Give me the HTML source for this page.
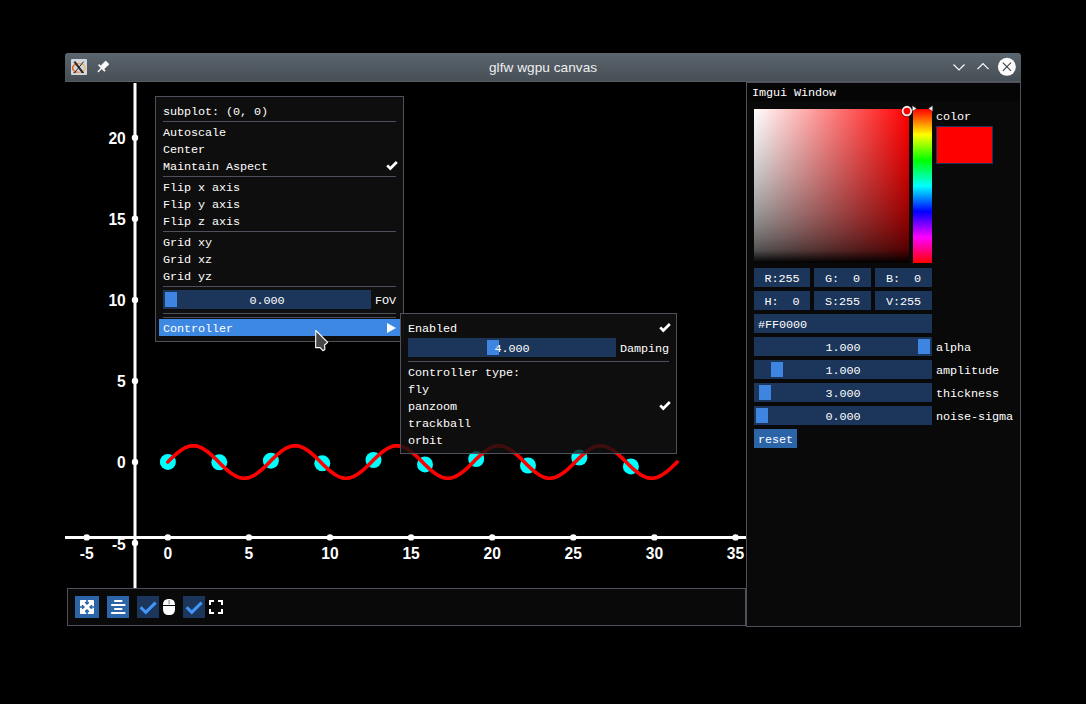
<!DOCTYPE html>
<html><head><meta charset="utf-8">
<style>
*{box-sizing:border-box;margin:0;padding:0}
html,body{width:1086px;height:704px;background:#000;overflow:hidden;position:relative}
.a{position:absolute}
.t{position:absolute;font-family:"Liberation Mono",monospace;font-size:11.8px;letter-spacing:-0.08px;line-height:13px;color:#fff;white-space:pre}
</style></head><body>
<div class="a" style="left:65px;top:53px;width:956px;height:29px;border-radius:3px 3px 0 0;background:linear-gradient(#5c666e 0px,#5a646c 1px,#474f56 28px,#535b63 28px)"></div>
<svg class="a" style="left:65px;top:53px" width="60" height="29" viewBox="65 53 60 29">
<rect x="71" y="59" width="16" height="16" rx="1" fill="#d3d8dc"/>
<ellipse cx="78.9" cy="68" rx="6.3" ry="4.4" fill="none" stroke="url(#xg)" stroke-width="1.5"/>
<defs><linearGradient id="xg" x1="0" x2="1"><stop offset="0" stop-color="#e4561c"/><stop offset="0.5" stop-color="#eea070"/><stop offset="1" stop-color="#e8c070"/></linearGradient></defs>
<line x1="74.4" y1="61.6" x2="82.6" y2="72.4" stroke="#2a2a2a" stroke-width="2"/><line x1="73.6" y1="72.6" x2="75.6" y2="72.6" stroke="#2a2a2a" stroke-width="1"/><line x1="81.4" y1="72.6" x2="84" y2="72.6" stroke="#2a2a2a" stroke-width="1"/>
<line x1="83.6" y1="61.6" x2="74.6" y2="72.6" stroke="#2a2a2a" stroke-width="1"/>
<g transform="translate(94 57)" fill="#fff" stroke="#fff">
<polygon points="11.65,3.98 15.06,7.24 9.94,11.93 7.1,8.52" stroke-width="0.6" stroke-linejoin="round"/>
<line x1="5.1" y1="8.2" x2="10.5" y2="13.6" stroke-width="1.7" stroke-linecap="round"/>
<line x1="7.8" y1="10.9" x2="4.3" y2="14.5" stroke-width="1.4" stroke-linecap="round"/>
</g></svg>
<svg class="a" style="left:940px;top:53px" width="81" height="29" viewBox="940 53 81 29">
<polyline points="953.5,64.5 959,70 964.5,64.5" fill="none" stroke="#fcfcfc" stroke-width="1.2"/>
<polyline points="977.5,69.2 983,63.7 988.5,69.2" fill="none" stroke="#fcfcfc" stroke-width="1.2"/>
<circle cx="1006.9" cy="66.8" r="9" fill="#fcfcfc"/>
<g stroke="#3b4045" stroke-width="1.1"><line x1="1002.8" y1="62.7" x2="1011" y2="70.9"/><line x1="1011" y1="62.7" x2="1002.8" y2="70.9"/></g>
</svg>
<div class="a" style="left:489px;top:57.5px;font-family:'Liberation Sans',sans-serif;font-size:13.6px;letter-spacing:0.05px;color:#eff0f1;line-height:20px;white-space:pre">glfw wgpu canvas</div>
<svg class="a" style="left:0;top:0" width="1086" height="704" viewBox="0 0 1086 704"><g stroke="#fff" stroke-width="3"><line x1="135" y1="83" x2="135" y2="588"/><line x1="65" y1="537.4" x2="746" y2="537.4"/></g><g fill="#fff"><circle cx="135" cy="137.8" r="3.2"/><circle cx="135" cy="218.8" r="3.2"/><circle cx="135" cy="299.9" r="3.2"/><circle cx="135" cy="381" r="3.2"/><circle cx="135" cy="462" r="3.2"/><circle cx="135" cy="543" r="3.2"/><circle cx="86.7" cy="537.4" r="3.2"/><circle cx="167.8" cy="537.4" r="3.2"/><circle cx="248.9" cy="537.4" r="3.2"/><circle cx="330" cy="537.4" r="3.2"/><circle cx="411.1" cy="537.4" r="3.2"/><circle cx="492.2" cy="537.4" r="3.2"/><circle cx="573.3" cy="537.4" r="3.2"/><circle cx="654.4" cy="537.4" r="3.2"/><circle cx="735.5" cy="537.4" r="3.2"/></g><g fill="#fff" font-family="Liberation Sans" font-weight="bold" font-size="15.6"><g text-anchor="end"><text x="125.8" y="144.20000000000002">20</text><text x="125.8" y="225.20000000000002">15</text><text x="125.8" y="306.29999999999995">10</text><text x="125.8" y="387.4">5</text><text x="125.8" y="468.4">0</text><text x="125.8" y="550.2">-5</text></g><g text-anchor="middle"><text x="86.7" y="559">-5</text><text x="167.8" y="559">0</text><text x="248.9" y="559">5</text><text x="330" y="559">10</text><text x="411.1" y="559">15</text><text x="492.2" y="559">20</text><text x="573.3" y="559">25</text><text x="654.4" y="559">30</text><text x="735.5" y="559">35</text></g></g><g fill="#00ffff"><circle cx="167.9" cy="461.9" r="8"/><circle cx="219.3" cy="462.3" r="8"/><circle cx="270.9" cy="460.7" r="8"/><circle cx="322.3" cy="463.3" r="8"/><circle cx="373.5" cy="460" r="8"/><circle cx="425" cy="464.4" r="8"/><circle cx="476.2" cy="459" r="8"/><circle cx="528" cy="465.5" r="8"/><circle cx="579.3" cy="457.6" r="8"/><circle cx="630.9" cy="466.4" r="8"/></g><path fill="none" stroke="#ff0000" stroke-width="3.6" stroke-linecap="round" stroke-linejoin="round" d="M167.8 462.0L169.5 460.3L171.2 458.6L172.9 457.0L174.6 455.4L176.3 453.9L178.0 452.5L179.7 451.2L181.4 450.0L183.1 448.9L184.8 448.0L186.5 447.2L188.2 446.6L189.9 446.1L191.6 445.9L193.3 445.8L195.0 445.9L196.7 446.1L198.4 446.6L200.1 447.2L201.8 448.0L203.4 448.9L205.1 450.0L206.8 451.2L208.5 452.5L210.2 453.9L211.9 455.4L213.6 457.0L215.3 458.6L217.0 460.3L218.7 462.0L220.4 463.7L222.1 465.4L223.8 467.0L225.5 468.6L227.2 470.1L228.9 471.5L230.6 472.8L232.3 474.0L234.0 475.1L235.7 476.0L237.4 476.8L239.1 477.4L240.8 477.9L242.5 478.1L244.2 478.2L245.9 478.1L247.6 477.9L249.3 477.4L251.0 476.8L252.7 476.0L254.4 475.1L256.1 474.0L257.8 472.8L259.5 471.5L261.2 470.1L262.9 468.6L264.6 467.0L266.3 465.4L268.0 463.7L269.7 462.0L271.3 460.3L273.0 458.6L274.7 457.0L276.4 455.4L278.1 453.9L279.8 452.5L281.5 451.2L283.2 450.0L284.9 448.9L286.6 448.0L288.3 447.2L290.0 446.6L291.7 446.1L293.4 445.9L295.1 445.8L296.8 445.9L298.5 446.1L300.2 446.6L301.9 447.2L303.6 448.0L305.3 448.9L307.0 450.0L308.7 451.2L310.4 452.5L312.1 453.9L313.8 455.4L315.5 457.0L317.2 458.6L318.9 460.3L320.6 462.0L322.3 463.7L324.0 465.4L325.7 467.0L327.4 468.6L329.1 470.1L330.8 471.5L332.5 472.8L334.2 474.0L335.9 475.1L337.6 476.0L339.2 476.8L340.9 477.4L342.6 477.9L344.3 478.1L346.0 478.2L347.7 478.1L349.4 477.9L351.1 477.4L352.8 476.8L354.5 476.0L356.2 475.1L357.9 474.0L359.6 472.8L361.3 471.5L363.0 470.1L364.7 468.6L366.4 467.0L368.1 465.4L369.8 463.7L371.5 462.0L373.2 460.3L374.9 458.6L376.6 457.0L378.3 455.4L380.0 453.9L381.7 452.5L383.4 451.2L385.1 450.0L386.8 448.9L388.5 448.0L390.2 447.2L391.9 446.6L393.6 446.1L395.3 445.9L397.0 445.8L398.7 445.9L400.4 446.1L402.1 446.6L403.8 447.2L405.5 448.0L407.1 448.9L408.8 450.0L410.5 451.2L412.2 452.5L413.9 453.9L415.6 455.4L417.3 457.0L419.0 458.6L420.7 460.3L422.4 462.0L424.1 463.7L425.8 465.4L427.5 467.0L429.2 468.6L430.9 470.1L432.6 471.5L434.3 472.8L436.0 474.0L437.7 475.1L439.4 476.0L441.1 476.8L442.8 477.4L444.5 477.9L446.2 478.1L447.9 478.2L449.6 478.1L451.3 477.9L453.0 477.4L454.7 476.8L456.4 476.0L458.1 475.1L459.8 474.0L461.5 472.8L463.2 471.5L464.9 470.1L466.6 468.6L468.3 467.0L470.0 465.4L471.7 463.7L473.4 462.0L475.0 460.3L476.7 458.6L478.4 457.0L480.1 455.4L481.8 453.9L483.5 452.5L485.2 451.2L486.9 450.0L488.6 448.9L490.3 448.0L492.0 447.2L493.7 446.6L495.4 446.1L497.1 445.9L498.8 445.8L500.5 445.9L502.2 446.1L503.9 446.6L505.6 447.2L507.3 448.0L509.0 448.9L510.7 450.0L512.4 451.2L514.1 452.5L515.8 453.9L517.5 455.4L519.2 457.0L520.9 458.6L522.6 460.3L524.3 462.0L526.0 463.7L527.7 465.4L529.4 467.0L531.1 468.6L532.8 470.1L534.5 471.5L536.2 472.8L537.9 474.0L539.6 475.1L541.3 476.0L542.9 476.8L544.6 477.4L546.3 477.9L548.0 478.1L549.7 478.2L551.4 478.1L553.1 477.9L554.8 477.4L556.5 476.8L558.2 476.0L559.9 475.1L561.6 474.0L563.3 472.8L565.0 471.5L566.7 470.1L568.4 468.6L570.1 467.0L571.8 465.4L573.5 463.7L575.2 462.0L576.9 460.3L578.6 458.6L580.3 457.0L582.0 455.4L583.7 453.9L585.4 452.5L587.1 451.2L588.8 450.0L590.5 448.9L592.2 448.0L593.9 447.2L595.6 446.6L597.3 446.1L599.0 445.9L600.7 445.8L602.4 445.9L604.1 446.1L605.8 446.6L607.5 447.2L609.2 448.0L610.8 448.9L612.5 450.0L614.2 451.2L615.9 452.5L617.6 453.9L619.3 455.4L621.0 457.0L622.7 458.6L624.4 460.3L626.1 462.0L627.8 463.7L629.5 465.4L631.2 467.0L632.9 468.6L634.6 470.1L636.3 471.5L638.0 472.8L639.7 474.0L641.4 475.1L643.1 476.0L644.8 476.8L646.5 477.4L648.2 477.9L649.9 478.1L651.6 478.2L653.3 478.1L655.0 477.9L656.7 477.4L658.4 476.8L660.1 476.0L661.8 475.1L663.5 474.0L665.2 472.8L666.9 471.5L668.6 470.1L670.3 468.6L672.0 467.0L673.7 465.4L675.4 463.7L677.1 462.0"/></svg>
<div class="a" style="left:67px;top:588px;width:679px;height:38px;background:#090909;border:1px solid #50505d"></div>
<div class="a" style="left:75px;top:596px;width:24px;height:22px;background:#2c64a8;"></div>
<div class="a" style="left:107px;top:596px;width:22px;height:22px;background:#2c64a8;"></div>
<div class="a" style="left:137px;top:596px;width:22px;height:22px;background:#1c355a;"></div>
<div class="a" style="left:183px;top:596px;width:22px;height:22px;background:#1c355a;"></div>
<svg class="a" style="left:70px;top:590px" width="160" height="32" viewBox="70 590 160 32">
<rect x="80" y="600" width="14" height="14" rx="0.8" fill="#fff"/>
<g transform="translate(80 600)" fill="none" stroke="#2c64a8" stroke-width="1.6">
<path d="M7 0V3.6M5.2 2.1L7 3.9L8.8 2.1"/><path d="M7 14V10.4M5.2 11.9L7 10.1L8.8 11.9"/>
<path d="M0 7H3.6M2.1 5.2L3.9 7L2.1 8.8"/><path d="M14 7H10.4M11.9 5.2L10.1 7L11.9 8.8"/>
</g>
<g stroke="#fff" stroke-width="2.2" stroke-linecap="round">
<line x1="115" y1="601" x2="121.5" y2="601"/><line x1="112" y1="605" x2="124.5" y2="605"/>
<line x1="115" y1="609" x2="121.5" y2="609"/><line x1="112" y1="613" x2="124.5" y2="613"/>
</g>
<polyline points="140.6,607.2 145.8,612.4 155.6,602.6" fill="none" stroke="#4296fa" stroke-width="3"/>
<polyline points="186.6,607.2 191.8,612.4 201.6,602.6" fill="none" stroke="#4296fa" stroke-width="3"/>
<rect x="163" y="599" width="12" height="16" rx="5" ry="5.5" fill="#fff"/>
<line x1="163" y1="605.5" x2="175" y2="605.5" stroke="#0a0a0a" stroke-width="1"/>
<line x1="169.2" y1="600" x2="169.2" y2="604.3" stroke="#b0b0b0" stroke-width="1.8"/>
<g fill="none" stroke="#fff" stroke-width="2">
<path d="M214 601H210V605"/><path d="M218 601H222V605"/><path d="M210 609V613H214"/><path d="M222 609V613H218"/>
</g>
</svg>
<div class="a" style="left:155px;top:96px;width:249px;height:246px;background:#0e0e0e;border:1px solid #50505d"></div>
<div class="t" style="left:163px;top:106.0px;">subplot: (0, 0)</div>
<div class="a" style="left:163px;top:121px;width:233px;height:1px;background:#50505d;"></div>
<div class="t" style="left:163px;top:127.0px;">Autoscale</div>
<div class="t" style="left:163px;top:144.0px;">Center</div>
<div class="t" style="left:163px;top:161.0px;">Maintain Aspect</div>
<svg class="a" style="left:386px;top:161px" width="13" height="11" viewBox="0 0 13 11"><polyline points="1.2,4.4 4.3,7.5 10.8,1.0" fill="none" stroke="#fff" stroke-width="2.7"/></svg>
<div class="a" style="left:163px;top:176px;width:233px;height:1px;background:#50505d;"></div>
<div class="t" style="left:163px;top:182.0px;">Flip x axis</div>
<div class="t" style="left:163px;top:199.0px;">Flip y axis</div>
<div class="t" style="left:163px;top:216.0px;">Flip z axis</div>
<div class="a" style="left:163px;top:231px;width:233px;height:1px;background:#50505d;"></div>
<div class="t" style="left:163px;top:237.0px;">Grid xy</div>
<div class="t" style="left:163px;top:254.0px;">Grid xz</div>
<div class="t" style="left:163px;top:271.0px;">Grid yz</div>
<div class="a" style="left:163px;top:286px;width:233px;height:1px;background:#50505d;"></div>
<div class="a" style="left:163px;top:290px;width:208px;height:19px;background:#1c355a;"></div>
<div class="a" style="left:165px;top:292px;width:12px;height:15px;background:#3d85e0;"></div>
<div class="t" style="left:249.5px;top:295.0px;">0.000</div>
<div class="t" style="left:375px;top:295.0px;">FOV</div>
<div class="a" style="left:163px;top:313px;width:233px;height:1px;background:#50505d;"></div>
<div class="a" style="left:163px;top:317px;width:233px;height:1px;background:#50505d;"></div>
<div class="a" style="left:159px;top:319px;width:241px;height:17px;background:#3c88e3;"></div>
<div class="t" style="left:163px;top:323.0px;">Controller</div>
<svg class="a" style="left:386px;top:322px" width="11" height="12" viewBox="0 0 11 12"><polygon points="1,1 10,6 1,11" fill="#fff"/></svg>
<div class="a" style="left:400px;top:313px;width:277px;height:141px;background:#0e0e0e;border:1px solid #50505d"></div>
<svg class="a" style="left:401px;top:314px" width="275" height="139" viewBox="401 314 275 139">
<g fill="#0e4949"><circle cx="167.9" cy="461.9" r="8"/><circle cx="219.3" cy="462.3" r="8"/><circle cx="270.9" cy="460.7" r="8"/><circle cx="322.3" cy="463.3" r="8"/><circle cx="373.5" cy="460" r="8"/><circle cx="425" cy="464.4" r="8"/><circle cx="476.2" cy="459" r="8"/><circle cx="528" cy="465.5" r="8"/><circle cx="579.3" cy="457.6" r="8"/><circle cx="630.9" cy="466.4" r="8"/></g>
<path fill="none" stroke="#400d0d" stroke-width="3.6" stroke-linecap="round" d="M167.8 462.0L169.5 460.3L171.2 458.6L172.9 457.0L174.6 455.4L176.3 453.9L178.0 452.5L179.7 451.2L181.4 450.0L183.1 448.9L184.8 448.0L186.5 447.2L188.2 446.6L189.9 446.1L191.6 445.9L193.3 445.8L195.0 445.9L196.7 446.1L198.4 446.6L200.1 447.2L201.8 448.0L203.4 448.9L205.1 450.0L206.8 451.2L208.5 452.5L210.2 453.9L211.9 455.4L213.6 457.0L215.3 458.6L217.0 460.3L218.7 462.0L220.4 463.7L222.1 465.4L223.8 467.0L225.5 468.6L227.2 470.1L228.9 471.5L230.6 472.8L232.3 474.0L234.0 475.1L235.7 476.0L237.4 476.8L239.1 477.4L240.8 477.9L242.5 478.1L244.2 478.2L245.9 478.1L247.6 477.9L249.3 477.4L251.0 476.8L252.7 476.0L254.4 475.1L256.1 474.0L257.8 472.8L259.5 471.5L261.2 470.1L262.9 468.6L264.6 467.0L266.3 465.4L268.0 463.7L269.7 462.0L271.3 460.3L273.0 458.6L274.7 457.0L276.4 455.4L278.1 453.9L279.8 452.5L281.5 451.2L283.2 450.0L284.9 448.9L286.6 448.0L288.3 447.2L290.0 446.6L291.7 446.1L293.4 445.9L295.1 445.8L296.8 445.9L298.5 446.1L300.2 446.6L301.9 447.2L303.6 448.0L305.3 448.9L307.0 450.0L308.7 451.2L310.4 452.5L312.1 453.9L313.8 455.4L315.5 457.0L317.2 458.6L318.9 460.3L320.6 462.0L322.3 463.7L324.0 465.4L325.7 467.0L327.4 468.6L329.1 470.1L330.8 471.5L332.5 472.8L334.2 474.0L335.9 475.1L337.6 476.0L339.2 476.8L340.9 477.4L342.6 477.9L344.3 478.1L346.0 478.2L347.7 478.1L349.4 477.9L351.1 477.4L352.8 476.8L354.5 476.0L356.2 475.1L357.9 474.0L359.6 472.8L361.3 471.5L363.0 470.1L364.7 468.6L366.4 467.0L368.1 465.4L369.8 463.7L371.5 462.0L373.2 460.3L374.9 458.6L376.6 457.0L378.3 455.4L380.0 453.9L381.7 452.5L383.4 451.2L385.1 450.0L386.8 448.9L388.5 448.0L390.2 447.2L391.9 446.6L393.6 446.1L395.3 445.9L397.0 445.8L398.7 445.9L400.4 446.1L402.1 446.6L403.8 447.2L405.5 448.0L407.1 448.9L408.8 450.0L410.5 451.2L412.2 452.5L413.9 453.9L415.6 455.4L417.3 457.0L419.0 458.6L420.7 460.3L422.4 462.0L424.1 463.7L425.8 465.4L427.5 467.0L429.2 468.6L430.9 470.1L432.6 471.5L434.3 472.8L436.0 474.0L437.7 475.1L439.4 476.0L441.1 476.8L442.8 477.4L444.5 477.9L446.2 478.1L447.9 478.2L449.6 478.1L451.3 477.9L453.0 477.4L454.7 476.8L456.4 476.0L458.1 475.1L459.8 474.0L461.5 472.8L463.2 471.5L464.9 470.1L466.6 468.6L468.3 467.0L470.0 465.4L471.7 463.7L473.4 462.0L475.0 460.3L476.7 458.6L478.4 457.0L480.1 455.4L481.8 453.9L483.5 452.5L485.2 451.2L486.9 450.0L488.6 448.9L490.3 448.0L492.0 447.2L493.7 446.6L495.4 446.1L497.1 445.9L498.8 445.8L500.5 445.9L502.2 446.1L503.9 446.6L505.6 447.2L507.3 448.0L509.0 448.9L510.7 450.0L512.4 451.2L514.1 452.5L515.8 453.9L517.5 455.4L519.2 457.0L520.9 458.6L522.6 460.3L524.3 462.0L526.0 463.7L527.7 465.4L529.4 467.0L531.1 468.6L532.8 470.1L534.5 471.5L536.2 472.8L537.9 474.0L539.6 475.1L541.3 476.0L542.9 476.8L544.6 477.4L546.3 477.9L548.0 478.1L549.7 478.2L551.4 478.1L553.1 477.9L554.8 477.4L556.5 476.8L558.2 476.0L559.9 475.1L561.6 474.0L563.3 472.8L565.0 471.5L566.7 470.1L568.4 468.6L570.1 467.0L571.8 465.4L573.5 463.7L575.2 462.0L576.9 460.3L578.6 458.6L580.3 457.0L582.0 455.4L583.7 453.9L585.4 452.5L587.1 451.2L588.8 450.0L590.5 448.9L592.2 448.0L593.9 447.2L595.6 446.6L597.3 446.1L599.0 445.9L600.7 445.8L602.4 445.9L604.1 446.1L605.8 446.6L607.5 447.2L609.2 448.0L610.8 448.9L612.5 450.0L614.2 451.2L615.9 452.5L617.6 453.9L619.3 455.4L621.0 457.0L622.7 458.6L624.4 460.3L626.1 462.0L627.8 463.7L629.5 465.4L631.2 467.0L632.9 468.6L634.6 470.1L636.3 471.5L638.0 472.8L639.7 474.0L641.4 475.1L643.1 476.0L644.8 476.8L646.5 477.4L648.2 477.9L649.9 478.1L651.6 478.2L653.3 478.1L655.0 477.9L656.7 477.4L658.4 476.8L660.1 476.0L661.8 475.1L663.5 474.0L665.2 472.8L666.9 471.5L668.6 470.1L670.3 468.6L672.0 467.0L673.7 465.4L675.4 463.7L677.1 462.0"/>
<rect x="403" y="314" width="1" height="27" fill="#141418"/>
</svg>
<div class="t" style="left:408px;top:323.0px;">Enabled</div>
<svg class="a" style="left:659px;top:323px" width="13" height="11" viewBox="0 0 13 11"><polyline points="1.2,4.4 4.3,7.5 10.8,1.0" fill="none" stroke="#fff" stroke-width="2.7"/></svg>
<div class="a" style="left:408px;top:338px;width:208px;height:19px;background:#1c355a;"></div>
<div class="a" style="left:487px;top:340px;width:12px;height:15px;background:#3d85e0;"></div>
<div class="t" style="left:494.5px;top:343.0px;">4.000</div>
<div class="t" style="left:620px;top:343.0px;">Damping</div>
<div class="a" style="left:408px;top:361px;width:261px;height:1px;background:#50505d;"></div>
<div class="t" style="left:408px;top:367.0px;">Controller type:</div>
<div class="t" style="left:408px;top:384.0px;">fly</div>
<div class="t" style="left:408px;top:401.0px;">panzoom</div>
<svg class="a" style="left:659px;top:401px" width="13" height="11" viewBox="0 0 13 11"><polyline points="1.2,4.4 4.3,7.5 10.8,1.0" fill="none" stroke="#fff" stroke-width="2.7"/></svg>
<div class="t" style="left:408px;top:418.0px;">trackball</div>
<div class="t" style="left:408px;top:435.0px;">orbit</div>
<div class="a" style="left:746px;top:82px;width:275px;height:545px;background:#090909;border:1px solid #50505d"></div>
<div class="a" style="left:747px;top:83px;width:273px;height:18px;background:#050505;"></div>
<div class="t" style="left:752px;top:87.0px;">Imgui Window</div>
<div class="a" style="left:754px;top:109px;width:155px;height:154px;background:linear-gradient(to right,#fff,#f00);"></div>
<div class="a" style="left:754px;top:109px;width:155px;height:154px;background:linear-gradient(rgba(0,0,0,0.000) 0.0%,rgba(0,0,0,0.039) 8.3%,rgba(0,0,0,0.080) 16.7%,rgba(0,0,0,0.123) 25.0%,rgba(0,0,0,0.168) 33.3%,rgba(0,0,0,0.217) 41.7%,rgba(0,0,0,0.270) 50.0%,rgba(0,0,0,0.328) 58.3%,rgba(0,0,0,0.393) 66.7%,rgba(0,0,0,0.467) 75.0%,rgba(0,0,0,0.557) 83.3%,rgba(0,0,0,0.677) 91.7%,rgba(0,0,0,1.000) 100.0%);"></div>
<div class="a" style="left:913px;top:109px;width:19px;height:154px;background:linear-gradient(#f00 0%,#ff0 16.67%,#0f0 33.33%,#0ff 50%,#00f 66.67%,#f0f 83.33%,#f00 100%);"></div>
<svg class="a" style="left:899px;top:103px" width="16" height="16" viewBox="0 0 16 16"><circle cx="7.9" cy="8.1" r="5.6" fill="none" stroke="#000" stroke-opacity="0.5" stroke-width="0.8"/><circle cx="7.9" cy="8.1" r="4.3" fill="#f00" stroke="#eeeeee" stroke-width="1.9"/></svg>
<svg class="a" style="left:908px;top:102px" width="28" height="12" viewBox="908 102 28 12"><g fill="#f4f4f4" stroke="#000" stroke-width="0.6" stroke-opacity="0.6"><polygon points="912.3,105.6 916.6,108.5 912.3,111.4"/><polygon points="932.7,105.6 928.4,108.5 932.7,111.4"/></g></svg>
<div class="t" style="left:936px;top:111.0px;">color</div>
<div class="a" style="left:936px;top:126px;width:57px;height:38px;background:#f00;border:1px solid #1c355a"></div>
<div class="a" style="left:754px;top:268px;width:56px;height:19px;background:#1c355a;"></div>
<div class="t" style="left:764.5px;top:273.0px;">R:255</div>
<div class="a" style="left:814px;top:268px;width:57px;height:19px;background:#1c355a;"></div>
<div class="t" style="left:825.0px;top:273.0px;">G:  0</div>
<div class="a" style="left:875px;top:268px;width:57px;height:19px;background:#1c355a;"></div>
<div class="t" style="left:886.0px;top:273.0px;">B:  0</div>
<div class="a" style="left:754px;top:291px;width:56px;height:19px;background:#1c355a;"></div>
<div class="t" style="left:764.5px;top:296.0px;">H:  0</div>
<div class="a" style="left:814px;top:291px;width:57px;height:19px;background:#1c355a;"></div>
<div class="t" style="left:825.0px;top:296.0px;">S:255</div>
<div class="a" style="left:875px;top:291px;width:57px;height:19px;background:#1c355a;"></div>
<div class="t" style="left:886.0px;top:296.0px;">V:255</div>
<div class="a" style="left:754px;top:314px;width:178px;height:19px;background:#1c355a;"></div>
<div class="t" style="left:758px;top:319.0px;">#FF0000</div>
<div class="a" style="left:754px;top:337px;width:178px;height:19px;background:#1c355a;"></div>
<div class="a" style="left:918px;top:339px;width:12px;height:15px;background:#3d85e0;"></div>
<div class="t" style="left:825.5px;top:342.0px;">1.000</div>
<div class="t" style="left:936px;top:342.0px;">alpha</div>
<div class="a" style="left:754px;top:360px;width:178px;height:19px;background:#1c355a;"></div>
<div class="a" style="left:771px;top:362px;width:12px;height:15px;background:#3d85e0;"></div>
<div class="t" style="left:825.5px;top:365.0px;">1.000</div>
<div class="t" style="left:936px;top:365.0px;">amplitude</div>
<div class="a" style="left:754px;top:383px;width:178px;height:19px;background:#1c355a;"></div>
<div class="a" style="left:759px;top:385px;width:12px;height:15px;background:#3d85e0;"></div>
<div class="t" style="left:825.5px;top:388.0px;">3.000</div>
<div class="t" style="left:936px;top:388.0px;">thickness</div>
<div class="a" style="left:754px;top:406px;width:178px;height:19px;background:#1c355a;"></div>
<div class="a" style="left:756px;top:408px;width:12px;height:15px;background:#3d85e0;"></div>
<div class="t" style="left:825.5px;top:411.0px;">0.000</div>
<div class="t" style="left:936px;top:411.0px;">noise-sigma</div>
<div class="a" style="left:754px;top:429px;width:43px;height:19px;background:#2c64a8;"></div>
<div class="t" style="left:758px;top:434.0px;">reset</div>
<svg class="a" style="left:310px;top:325px" width="24" height="32" viewBox="310 325 24 32"><path d="M315.8 330.5L315.6 347.6L320.1 347.6L322.9 350.7L324.9 349.5L324.6 345L327.7 342.4Z" fill="#484848" stroke="#fff" stroke-width="1.1" stroke-linejoin="round"/></svg>
</body></html>
